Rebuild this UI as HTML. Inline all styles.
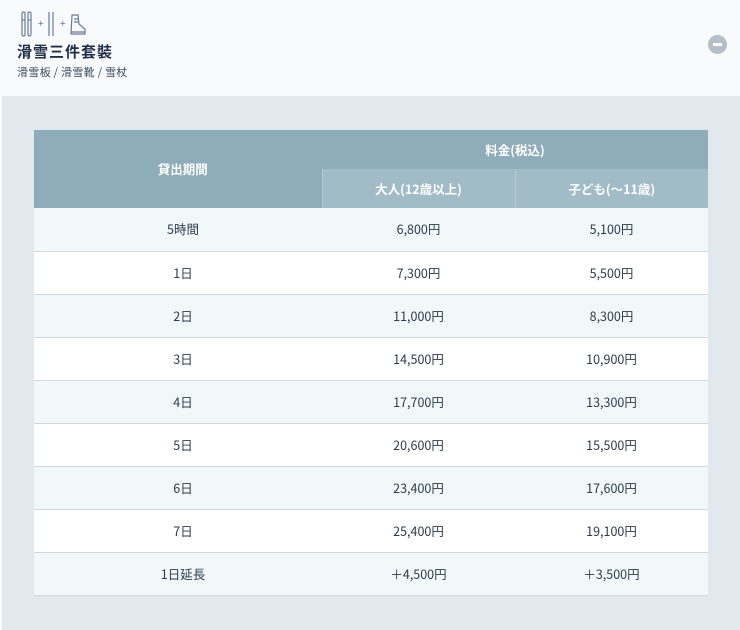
<!DOCTYPE html>
<html><head><meta charset="utf-8"><style>
*{margin:0;padding:0;box-sizing:border-box}
body{width:740px;height:630px;background:#f8fafc;font-family:"Noto Sans CJK JP","Liberation Sans",sans-serif;color:#2b3a4a;position:relative;overflow:hidden}
.hd{position:absolute;left:0;top:0;width:740px;height:96px;background:#f8fafc}
.title{position:absolute;left:17px;top:41px;font-size:15px;font-weight:bold;color:#1f2f4a;letter-spacing:1px;line-height:22px}
.sub{position:absolute;left:17px;top:64px;font-size:11px;color:#3a4a5e;line-height:16px;letter-spacing:0.3px}
.minus{position:absolute;left:708px;top:35px;width:19px;height:19px;border-radius:50%;background:#b5bfc8}
.minus:after{content:"";position:absolute;left:5px;top:8px;width:9px;height:3px;background:#fff}
.panel{position:absolute;left:2px;top:96px;width:738px;height:534px;background:#e1e9ee}
table{position:absolute;left:34px;top:130px;border-collapse:collapse;width:674px;font-size:12.5px;text-align:center;line-height:16px}
th{color:#fff;font-weight:bold;font-size:12.5px}
th.a{background:#8facbb;height:39px}
th.b{background:#a1bbc7;height:39px;border-left:1px solid #b8ccd5}
td{height:43px;border-bottom:1px solid #cfd8de;color:#2d3a48}
td:first-child,th.c{padding-left:10px}
tr.o td{background:#f1f8fa}
tr.e td{background:#fff}
</style></head><body>
<div class="hd">
<svg style="position:absolute;left:17px;top:11px" width="80" height="26" viewBox="0 0 80 26" fill="none" stroke="#6a7a9a" stroke-width="1.2">
<rect x="5" y="1" width="3" height="24" rx="1.5"/><rect x="11" y="1" width="3" height="24" rx="1.5"/>
<line x1="5" y1="9" x2="8" y2="9"/><line x1="11" y1="9" x2="14" y2="9"/>
<line x1="32" y1="1" x2="32" y2="25"/><line x1="36" y1="1" x2="36" y2="25"/>
<path d="M55 4h6l1 9 6 5v5H54z"/><path d="M57 8h4M57 11h4M54 21h14"/>
</svg>
<span style="position:absolute;left:38px;top:15px;font-size:10px;color:#6a7a9a">+</span>
<span style="position:absolute;left:60px;top:15px;font-size:10px;color:#6a7a9a">+</span>
<div class="title">滑雪三件套裝</div>
<div class="sub">滑雪板 / 滑雪靴 / 雪杖</div>
<div class="minus"></div>
</div>
<div class="panel"></div>
<table>
<tr><th class="a c" rowspan="2" style="width:288px">貸出期間</th><th class="a" colspan="2">料金(税込)</th></tr>
<tr><th class="b" style="width:193px">大人(12歳以上)</th><th class="b" style="width:193px">子ども(〜11歳)</th></tr>
<tr class="o"><td>5時間</td><td>6,800円</td><td>5,100円</td></tr>
<tr class="e"><td>1日</td><td>7,300円</td><td>5,500円</td></tr>
<tr class="o"><td>2日</td><td>11,000円</td><td>8,300円</td></tr>
<tr class="e"><td>3日</td><td>14,500円</td><td>10,900円</td></tr>
<tr class="o"><td>4日</td><td>17,700円</td><td>13,300円</td></tr>
<tr class="e"><td>5日</td><td>20,600円</td><td>15,500円</td></tr>
<tr class="o"><td>6日</td><td>23,400円</td><td>17,600円</td></tr>
<tr class="e"><td>7日</td><td>25,400円</td><td>19,100円</td></tr>
<tr class="o"><td>1日延長</td><td>＋4,500円</td><td>＋3,500円</td></tr>
</table>
</body></html>
